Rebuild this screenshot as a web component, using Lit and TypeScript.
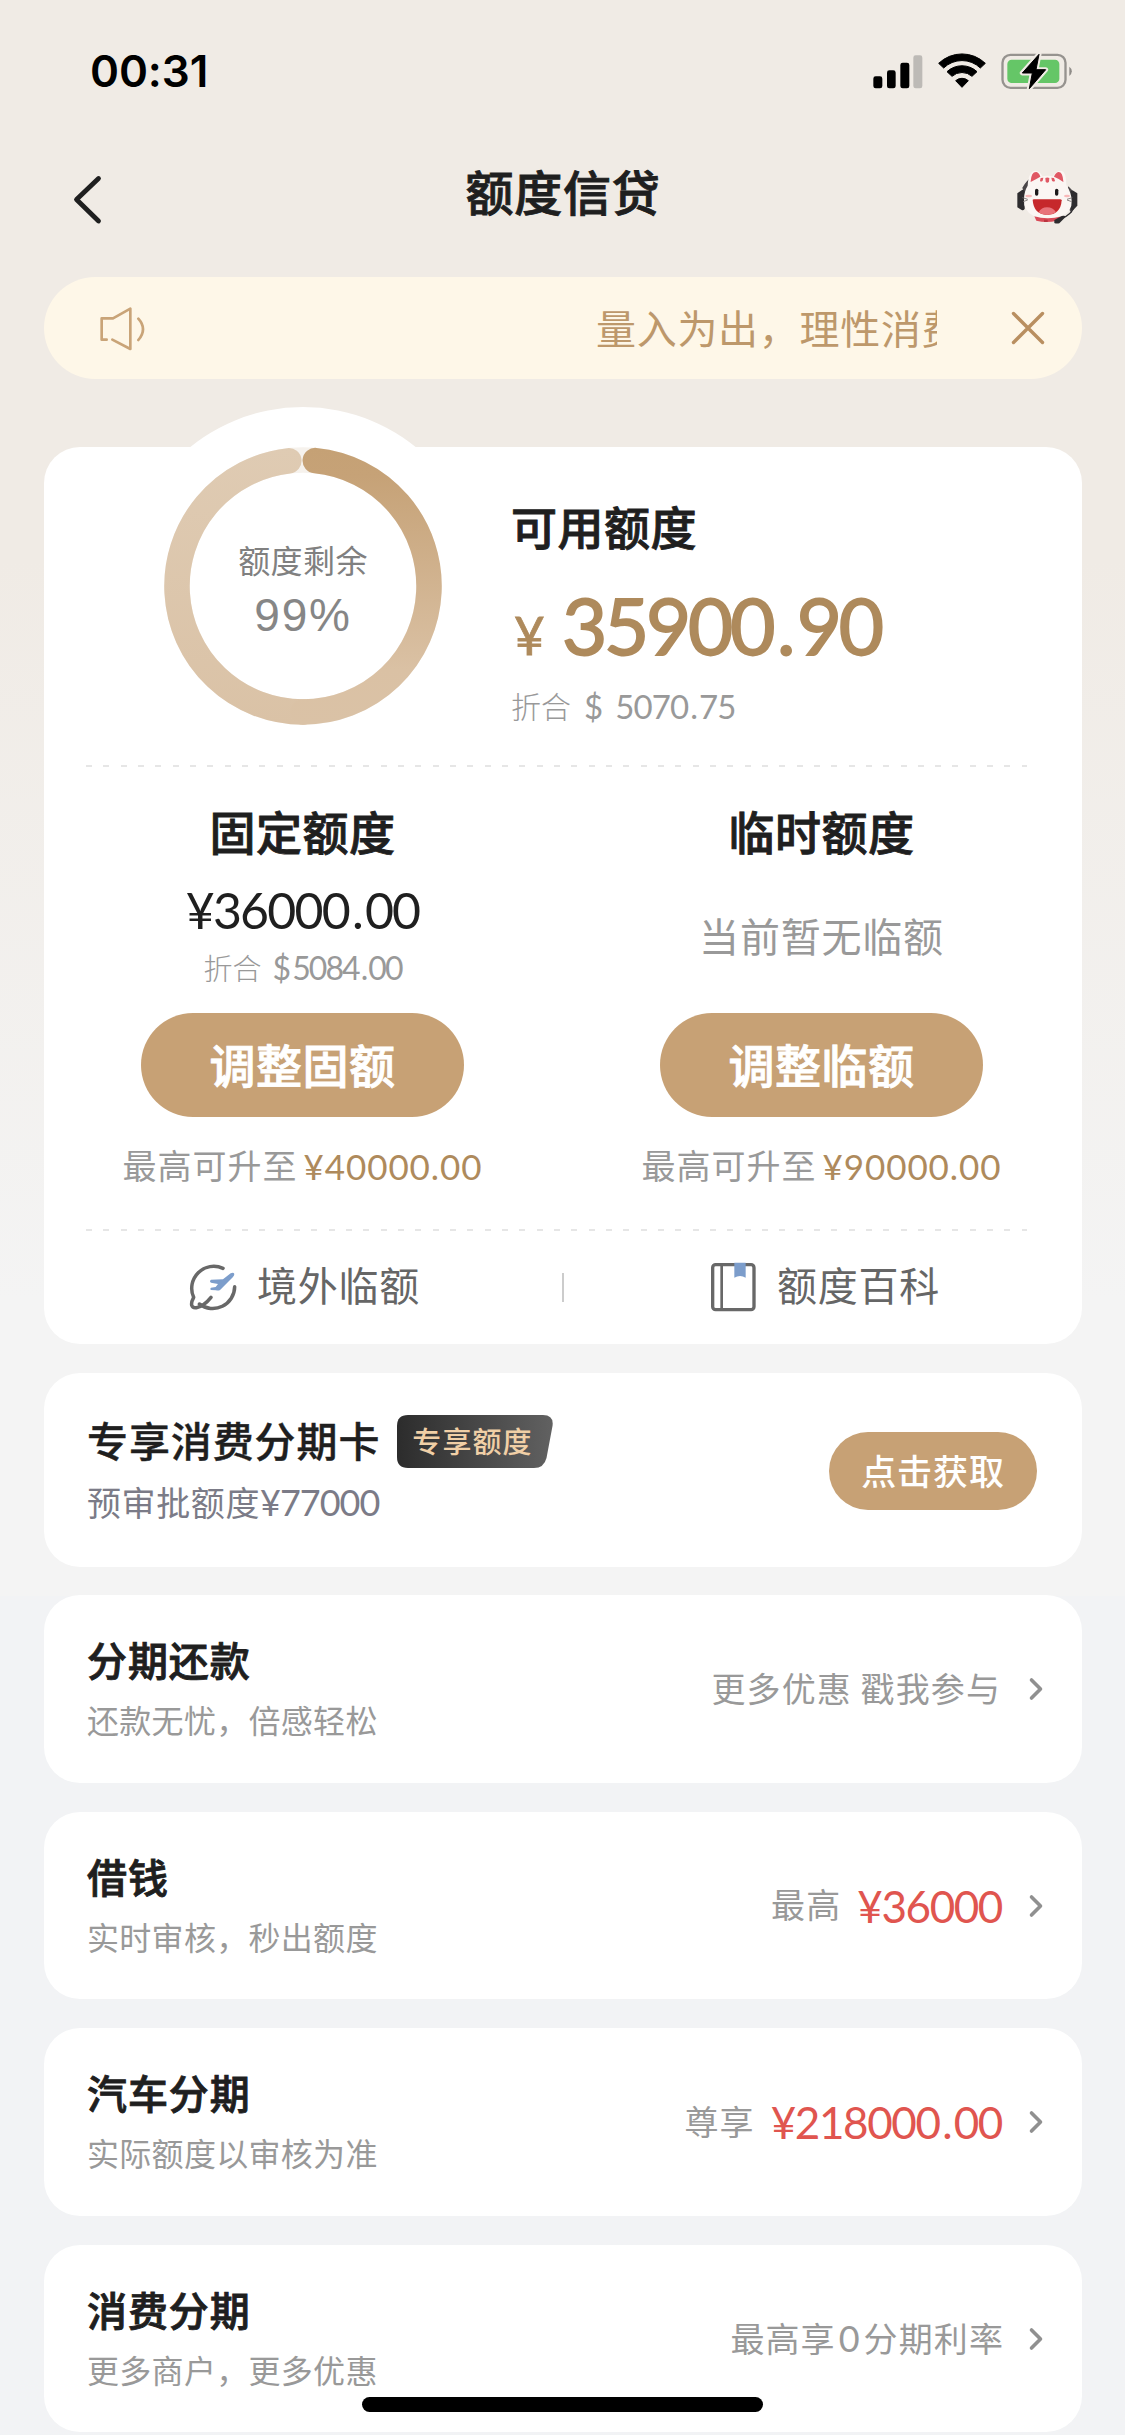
import { LitElement, html, css } from "lit";
import { customElement, property } from "lit/decorators.js";

interface Product {
  title: string;
  note: string;
  label: string;
  amount?: string;
  kind?: string;
}

const PRODUCTS: Product[] = [
  { title: "分期还款", note: "还款无忧，倍感轻松", label: "更多优惠 戳我参与", kind: "promo" },
  { title: "借钱", note: "实时审核，秒出额度", label: "最高", amount: "¥36000" },
  { title: "汽车分期", note: "实际额度以审核为准", label: "尊享", amount: "¥218000.00" },
  { title: "消费分期", note: "更多商户，更多优惠", label: "最高享0分期利率", kind: "rate" },
];

/** Splits an amount so that the decimal point can carry its own side spacing. */
const money = (v: string) => {
  const [whole, cents] = v.split(".");
  return cents === undefined ? html`${whole}` : html`${whole}<span class="dot">.</span>${cents}`;
};

const base = css`
  * { box-sizing: border-box; }
  .cjk { font-family: "Noto Sans CJK SC", sans-serif; white-space: nowrap; }
  .num { font-family: Lato, "Liberation Sans", sans-serif; white-space: nowrap; }
  .semi { font-weight: 500; -webkit-text-stroke: 0.9px currentColor; }
  .dot { padding: 0 0.06em; }
  svg { display: block; flex: none; }
`;

@customElement("status-bar")
class StatusBar extends LitElement {
  static styles = [base, css`
    :host { display: flex; height: 145px; padding: 0 51px 3px 90px; align-items: center; justify-content: space-between; }
    .time { font: 600 44px/60px Inter, sans-serif; color: #000; letter-spacing: -0.1px; }
  `];
  render() {
    return html`
      <div class="time">00:31</div>
      <svg width="201" height="36" viewBox="95 68 603 108">
        <rect x="96" y="138" width="27" height="36" rx="7"/>
        <rect x="137" y="120" width="26" height="54" rx="7"/>
        <rect x="177" y="97" width="27" height="77" rx="7"/>
        <rect x="216" y="75" width="27" height="99" rx="7" fill="#bdbab6"/>
        <g stroke="#000" stroke-width="3" stroke-linejoin="round">
          <path d="M292 99A101 101 0 0 1 432 99L417 113A79 79 0 0 0 307 113Z"/>
          <path d="M317 124A66 66 0 0 1 407 124L392 138A45 45 0 0 0 332 138Z"/>
          <path d="M343 151A29 29 0 0 1 381 151L362 171Z"/>
        </g>
        <rect x="483.500" y="73.500" width="189" height="99" rx="24" fill="none" stroke="#96938f" stroke-width="7"/>
        <rect x="498" y="88" width="156" height="70" rx="13" fill="#65c667"/>
        <path d="M684 109V137A17 17 0 0 0 684 109Z" fill="#8f8c88"/>
        <path d="M593 72L543 128H573L564 175L613 118H584Z" stroke="#f0ebe5" stroke-width="15" stroke-linejoin="round"/>
        <path d="M593 72L543 128H573L564 175L613 118H584Z" stroke="#000" stroke-width="3" stroke-linejoin="round"/>
      </svg>`;
  }
}

@customElement("nav-bar")
class NavBar extends LitElement {
  static styles = [base, css`
    :host { display: grid; grid-template-columns: 1fr auto 1fr; height: 131px; align-items: start; padding: 0 47px 0 72px; }
    .back { margin-top: 30px; }
    .title { margin-top: 15px; font-size: 48px; line-height: 60px; color: #1f1f1f; letter-spacing: 0.8px; transform: translateX(-12px); }
    .cat { justify-self: end; margin-top: 25px; }
  `];
  render() {
    return html`
      <svg class="back" width="30" height="50" viewBox="0 0 30 50" fill="none" stroke="#1f1f1f" stroke-width="4.800" stroke-linecap="round" stroke-linejoin="round"><path d="M26.500 3.500L4.500 24.500L26.500 46"/></svg>
      <div class="title cjk semi">额度信贷</div>
      <svg class="cat" width="61" height="54" viewBox="530 421 183 162">
        <path d="M546 474Q560 450 572 444L580 462L554 500ZM684 470L700 486L694 550L672 520Z" fill="#4a4648"/>
        <path d="M531 491L545 481Q553 478 553 488V536Q552 544 544 541L531 533Z" fill="#2e2c2f"/>
        <path d="M711 491L699 483Q690 480 690 490V532Q690 542 698 542L711 528Z" fill="#2e2c2f"/>
        <path d="M582 560H662L650 573Q618 581 588 573Z" fill="#d94b58"/>
        <path d="M611 570H622V577H611Z" fill="#b9353f"/>
        <path d="M562 468Q564 424 586 423Q599 424 606 440Q622 436 638 440Q648 422 663 423Q678 426 678 466Q694 490 694 514Q696 545 664 560Q620 572 580 559Q548 544 551 508Q552 484 562 468Z" fill="#fbf6f3"/>
        <path d="M571 455Q573 426 588 427Q596 429 600 441Q588 448 571 457ZM669 455Q667 426 654 427Q646 429 641 441Q656 447 669 457Z" fill="#e05864"/>
        <path d="M615 445Q621 442 627 445L626 456Q621 462 616 456ZM601 445L609 444L607 453Q601 458 599 453ZM641 445L633 444L635 453Q641 458 644 453Z" fill="#e05864"/>
        <ellipse cx="565" cy="499" rx="10" ry="4" fill="#f8b9b9"/><ellipse cx="680" cy="499" rx="9" ry="4" fill="#f8b9b9"/>
        <rect x="584" y="477" width="10" height="21" rx="5" fill="#1d1a1b"/><rect x="644" y="477" width="10" height="21" rx="5" fill="#1d1a1b"/>
        <path d="M577 511Q577 509 581 509H659Q664 509 664 512Q661 555 620 556Q580 554 577 511Z" fill="#c6282b"/>
        <path d="M595 548Q603 533 620 533Q638 533 647 548Q635 556 620 556Q605 556 595 548Z" fill="#e8737a"/>
        <path d="M546 504L562 509M548 516L562 511M696 504L680 509M694 516L680 511" stroke="#77706f" stroke-width="2.500" fill="none"/>
        <path d="M700 535Q690 556 668 564" stroke="#2e2c2f" stroke-width="4" fill="none"/>
        <path d="M642 571L664 559Q676 556 675 563L657 581Q648 583 642 580Z" fill="#2e2c2f"/>
      </svg>`;
  }
}

@customElement("notice-bar")
class NoticeBar extends LitElement {
  static styles = [base, css`
    :host { display: flex; height: 102px; margin: 1px 43px 0 44px; border-radius: 51px; background: #fef7e8; align-items: center; padding: 0 37px 0 54px; }
    .marquee { flex: 1; margin-left: 20px; margin-right: 74px; overflow: hidden; padding: 0 0 2px 430px; font-size: 40px; line-height: 56px; letter-spacing: 0.7px; color: #bd986b; }
  `];
  render() {
    return html`
      <svg width="48" height="46" viewBox="24 27 144 138" fill="none" stroke="#c9a478" stroke-width="8" stroke-linecap="round" stroke-linejoin="round">
        <path d="M50 131H35V67H69L121 38V159L67 131"/><path d="M145 68Q173 99 145 132"/>
      </svg>
      <div class="marquee cjk">量入为出，理性消费</div>
      <svg width="34" height="34" viewBox="0 0 34 34" stroke="#b98f60" stroke-width="3.400" stroke-linecap="round"><path d="M2.500 2.500L31.500 31.500M31.500 2.500L2.500 31.500"/></svg>`;
  }
}

@customElement("quota-gauge")
class QuotaGauge extends LitElement {
  @property({ type: Number }) percent = 99;
  static styles = [base, css`
    :host { display: grid; width: 358px; height: 358px; }
    .ring, .text { grid-area: 1 / 1; }
    .text { display: flex; flex-direction: column; align-items: center; padding-top: 132px; color: #868686; }
    .name { font-size: 32px; line-height: 40px; letter-spacing: 0.4px; color: #808080; }
    .value { font-size: 46px; line-height: 50px; font-family: "Liberation Sans", sans-serif; letter-spacing: 1.8px; margin-top: 11px; }
  `];
  render() {
    return html`
      <svg class="ring" width="358" height="358" viewBox="0 0 358 358" fill="none">
        <defs>
          <linearGradient id="a" x1="0" y1="41" x2="0" y2="318" gradientUnits="userSpaceOnUse"><stop stop-color="#c5a175"/><stop offset=".1" stop-color="#c6a277"/><stop offset=".8" stop-color="#dac1a4"/><stop offset="1" stop-color="#dac2a6"/></linearGradient>
          <linearGradient id="b" x1="0" y1="318" x2="0" y2="41" gradientUnits="userSpaceOnUse"><stop stop-color="#dac2a6"/><stop offset="1" stop-color="#dfcbb3"/></linearGradient>
        </defs>
        <circle cx="179" cy="179" r="179" fill="#fff"/>
        <circle cx="179" cy="179" r="126" stroke="#f6f2ed" stroke-width="25.500"/>
        <g stroke-width="25.500" stroke-linecap="round">
          <path d="M179 305A126 126 0 0 1 164.800 53.800" stroke="url(#b)"/>
          <path d="M191.300 53.600A126 126 0 0 1 179 305" stroke="url(#a)"/>
        </g>
      </svg>
      <div class="text">
        <div class="name cjk">额度剩余</div>
        <div class="value">${this.percent}%</div>
      </div>`;
  }
}

@customElement("quota-card")
class QuotaCard extends LitElement {
  static styles = [base, css`
    :host { display: block; height: 897px; margin: 68px 43px 0 44px; border-radius: 36px; background: #fff; }
    .top { display: flex; height: 318px; }
    .gauge { margin: -40px 0 0 80px; flex: none; }
    .avail { padding: 48px 0 0 29px; }
    .head { font-size: 46px; line-height: 60px; color: #1f1f1f; letter-spacing: 0.5px; }
    .big { display: flex; align-items: baseline; height: 80px; margin-top: 30px; line-height: 80px; color: #ae8a5c; }
    .yen { font-size: 53px; width: 51px; padding-left: 3px; -webkit-text-stroke: 0.8px currentColor; }
    .sum { font-size: 78px; letter-spacing: -3.200px; -webkit-text-stroke: 1.8px currentColor; }
    .usd { display: flex; align-items: center; height: 40px; margin-top: 20px; line-height: 40px; color: #999; }
    .usd .cjk { font-size: 30px; font-weight: 300; }
    .usd .num { font-size: 33px; letter-spacing: -0.900px; padding-top: 2px; }
    .sign { margin: 0 13px 0 13px; }
    .dash { height: 2px; margin: 0 55px 0 42px; background: repeating-linear-gradient(90deg, #e6e6e6 0 6px, transparent 6px 17.330px); }
    .halves { display: grid; grid-template-columns: 1fr 1fr; height: 462px; }
    .half { display: flex; flex-direction: column; align-items: center; padding: 33px 2px 0 0; }
    .sum2 { margin-top: 25px; height: 50px; font-size: 50px; line-height: 50px; letter-spacing: -1.800px; color: #1f1f1f; }
    .half .usd { margin-top: 12px; }
    .half .usd .cjk { font-size: 29px; }
    .half .usd .num { font-size: 32px; letter-spacing: -1.900px; margin-left: 11px; }
    .half .usd .s { margin-right: 3px; }
    .none { margin-top: 47px; height: 56px; margin-bottom: 50px; font-size: 40px; line-height: 56px; letter-spacing: 0.8px; color: #999; }
    .btn { width: 323px; height: 104px; flex: none; border-radius: 52px; background: #c7a175; color: #fff; font-size: 46px; line-height: 100px; letter-spacing: 0.5px; text-align: center; }
    .after { margin-top: 26px; }
    .max { margin-top: 28px; display: flex; line-height: 40px; color: #999; }
    .max .cjk { font-size: 34px; letter-spacing: 1px; }
    .max .num { font-size: 35px; letter-spacing: 0.9px; color: #ae8a5c; margin-left: 6px; padding-top: 1px; }
    .max .dot { padding: 0; }
    .links { display: grid; grid-template-columns: 1fr 2px 1fr; height: 113px; align-items: center; }
    .link { display: flex; align-items: center; justify-content: center; gap: 20px; font-size: 40px; line-height: 56px; letter-spacing: 0.7px; color: #666; padding: 0 0 2px 3px; }
    .link .cjk { padding-bottom: 5px; }
    .sep { height: 29px; background: #ccc; }
  `];
  render() {
    return html`
      <div class="top">
        <quota-gauge class="gauge"></quota-gauge>
        <div class="avail">
          <div class="head cjk semi">可用额度</div>
          <div class="big num"><span class="yen">¥</span><span class="sum">${money("35900.90")}</span></div>
          <div class="usd"><span class="cjk">折合</span><span class="num sign">$</span><span class="num">${money("5070.75")}</span></div>
        </div>
      </div>
      <div class="dash"></div>
      <div class="halves">
        <div class="half">
          <div class="head cjk semi">固定额度</div>
          <div class="sum2 num">¥${money("36000.00")}</div>
          <div class="usd"><span class="cjk">折合</span><span class="num"><span class="s">$</span>${money("5084.00")}</span></div>
          <div class="btn cjk semi after">调整固额</div>
          <div class="max"><span class="cjk">最高可升至</span><span class="num">¥${money("40000.00")}</span></div>
        </div>
        <div class="half">
          <div class="head cjk semi">临时额度</div>
          <div class="none cjk">当前暂无临额</div>
          <div class="btn cjk semi">调整临额</div>
          <div class="max"><span class="cjk">最高可升至</span><span class="num">¥${money("90000.00")}</span></div>
        </div>
      </div>
      <div class="dash"></div>
      <div class="links">
        <div class="link">
          <svg width="48" height="50" viewBox="59 65 144 150" fill="none" stroke="#686868" stroke-width="10.500" stroke-linecap="round" stroke-linejoin="round">
            <path d="M161 84A66 66 0 0 0 73 171C62 192 66 204 81 202C98 199 113 186 125 171"/>
            <path d="M196 139A66 66 0 0 1 90 191"/>
            <path d="M184 99Q193 95 195 101Q195 105 191 110L153 148Q148 152 140 150L125 149Q120 146 125 142L139 140L146 131L125 127Q119 123 125 118L161 117Z" fill="#7c9dcb" stroke="none"/>
          </svg>
          <span class="cjk">境外临额</span>
        </div>
        <div class="sep"></div>
        <div class="link">
          <svg width="48" height="50" viewBox="86 65 144 150" fill="none" stroke="#686868" stroke-width="10">
            <rect x="97" y="73" width="124" height="135" rx="9"/><path d="M124 72V209" stroke-width="8"/>
            <path d="M162 67H196V112Q188 107 179 107Q170 107 162 112Z" fill="#7c9dcb" stroke="none"/>
          </svg>
          <span class="cjk">额度百科</span>
        </div>
      </div>`;
  }
}

@customElement("offer-card")
class OfferCard extends LitElement {
  static styles = [base, css`
    :host { display: flex; height: 194px; margin: 29px 43px 0 44px; border-radius: 36px; background: #fff; padding: 0 45px 0 43px; align-items: center; justify-content: space-between; }
    .offer { padding-bottom: 4px; }
    .row { display: flex; align-items: center; height: 53px; }
    .title { font-size: 41px; line-height: 52px; letter-spacing: 0.900px; font-weight: 500; -webkit-text-stroke: 0.4px currentColor; color: #1f1f1f; padding-bottom: 5px; }
    .badge { display: grid; margin-left: 17px; }
    .badge > * { grid-area: 1 / 1; }
    .tag { font-size: 29px; line-height: 50px; letter-spacing: 1.1px; font-weight: 500; color: #f0cfa6; padding-left: 15px; }
    .pre { display: flex; margin-top: 14px; line-height: 40px; color: #7b7b87; }
    .pre .cjk { font-size: 34px; letter-spacing: 0.6px; }
    .pre .num { font-size: 36px; letter-spacing: -1px; }
    .go { width: 208px; height: 78px; margin-top: 2px; border-radius: 39px; background: #c7a175; color: #fff; font-size: 35px; line-height: 75px; letter-spacing: 0.9px; font-weight: 500; text-align: center; }
  `];
  render() {
    return html`
      <div class="offer">
        <div class="row">
          <div class="title cjk">专享消费分期卡</div>
          <div class="badge">
            <svg width="156" height="53" viewBox="0 0 156 53">
              <defs><linearGradient id="g"><stop stop-color="#2c2c2c"/><stop offset="1" stop-color="#616161"/></linearGradient></defs>
              <path d="M11 0H146Q157 0 155.500 11L149.500 43Q147 53 137 53H11Q0 53 0 42V11Q0 0 11 0Z" fill="url(#g)"/>
            </svg>
            <div class="tag cjk">专享额度</div>
          </div>
        </div>
        <div class="pre"><span class="cjk">预审批额度</span><span class="num">¥77000</span></div>
      </div>
      <div class="go cjk">点击获取</div>`;
  }
}

@customElement("product-card")
class ProductCard extends LitElement {
  @property({ attribute: false }) item!: Product;
  static styles = [base, css`
    :host { display: flex; flex: none; height: 187.600px; margin: 0 43px 0 44px; border-radius: 36px; background: #fff; padding: 0 38px 0 43px; justify-content: space-between; }
    .title { margin-top: 36px; font-size: 40px; line-height: 56px; letter-spacing: 0.900px; color: #1f1f1f; }
    .note { margin-top: 12px; font-size: 32px; line-height: 40px; letter-spacing: 0.300px; color: #999; }
    .side { display: flex; align-items: center; color: #999; line-height: 56px; padding-top: 1px; }
    .label { font-size: 34px; letter-spacing: 1.100px; padding-bottom: 3px; margin-right: 16px; }
    .promo { margin-right: 27px; }
    .rate { margin-right: 24px; }
    .amt { font-size: 44px; letter-spacing: -1.400px; color: #e0554f; margin-right: 26px; }
    .zero { font-size: 36px; letter-spacing: 0; padding: 0 4px 0 3px; font-family: Lato, sans-serif; }
  `];
  render() {
    const { title, note, label, amount, kind } = this.item;
    const [before, after] = label.split("0");
    return html`
      <div>
        <div class="title cjk semi">${title}</div>
        <div class="note cjk">${note}</div>
      </div>
      <div class="side">
        <span class="label cjk ${kind ?? ""}">${before}${after === undefined ? "" : html`<span class="zero">0</span>${after}`}</span>
        ${amount ? html`<span class="amt num">${money(amount)}</span>` : ""}
        <svg width="16" height="26" viewBox="0 0 16 26" fill="none" stroke="#909090" stroke-width="3.600" stroke-linecap="round" stroke-linejoin="round"><path d="M3.500 4L12.500 13L3.500 22"/></svg>
      </div>`;
  }
}

@customElement("app-root")
class AppRoot extends LitElement {
  static styles = [base, css`
    :host { display: block; }
    .page { display: flex; flex-direction: column; position: relative; width: 1125px; height: 2435px; overflow: hidden;
      background: linear-gradient(#f0ebe5 0, #f0ebe5 560px, #f4f4f4 1300px, #f4f4f4 1596px, #f2f3f5 1596px); }
    .list { display: flex; flex-direction: column; gap: 29px; margin-top: 28px; }
    .home { position: absolute; left: 362px; bottom: 23px; width: 401px; height: 15px; border-radius: 8px; background: #000; }
  `];
  render() {
    return html`
      <div class="page">
        <status-bar></status-bar>
        <nav-bar></nav-bar>
        <notice-bar></notice-bar>
        <quota-card></quota-card>
        <offer-card></offer-card>
        <div class="list">${PRODUCTS.map((p) => html`<product-card .item=${p}></product-card>`)}</div>
        <div class="home"></div>
      </div>`;
  }
}
